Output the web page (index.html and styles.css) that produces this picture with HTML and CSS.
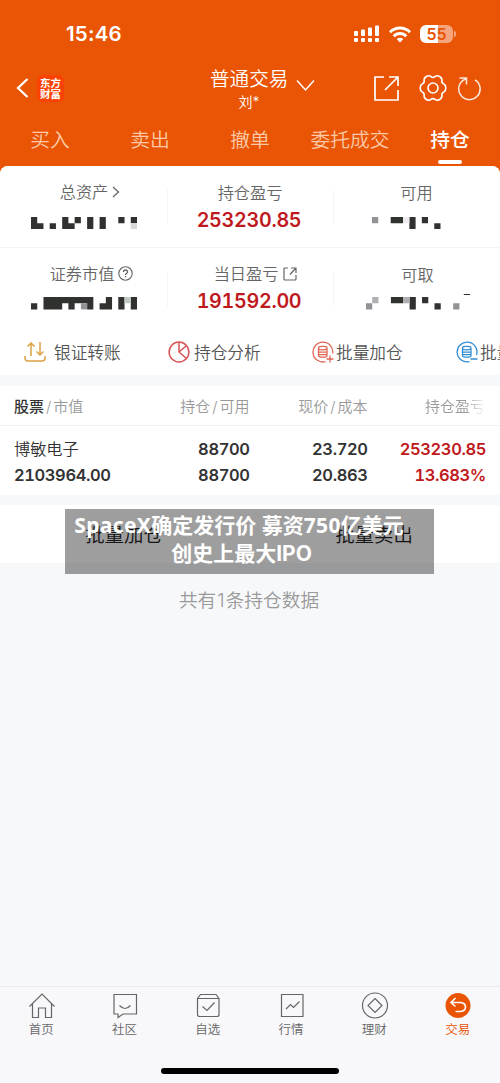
FILE: index.html
```html
<!DOCTYPE html>
<html lang="zh-CN">
<head>
<meta charset="utf-8">
<title>持仓</title>
<link rel="stylesheet" href="styles.css">
</head>
<body>
<div class="app">
  <header class="top">
    <div class="status">
      <span class="clock">15:46</span>
      <div class="status-icons">
        <svg width="26" height="18" viewBox="0 0 26 18" fill="#fff"><rect x="0" y="6" width="4" height="5" rx="1"/><rect x="7" y="4.500" width="4" height="6.500" rx="1"/><rect x="14" y="2.500" width="4" height="8.500" rx="1"/><rect x="21" y="0.500" width="4" height="10.500" rx="1"/><rect x="0" y="13" width="4" height="4" rx="1"/><rect x="7" y="13" width="4" height="4" rx="1"/><rect x="14" y="13" width="4" height="4" rx="1"/><rect x="21" y="13" width="4" height="4" rx="1"/></svg>
        <svg width="22" height="17" viewBox="0 0 22 17" fill="none" stroke="#fff" stroke-width="2.900"><path d="M1 6.200C6.500 .6 15.500 .6 21 6.200"/><path d="M4.700 10.200C8.200 6.600 13.800 6.600 17.300 10.200"/><path d="M11 16.500l-3.300-3.600c1.900-1.700 4.700-1.700 6.600 0z" fill="#fff" stroke="none"/></svg>
        <div class="battery"><span>5</span><span class="empty">5</span></div>
      </div>
    </div>
    <div class="titlebar">
      <svg class="back" width="13" height="20" viewBox="0 0 13 20" fill="none" stroke="#fff" stroke-width="2.300"><path d="M11.500 1L2 10l9.500 9"/></svg>
      <div class="logo">东方<br>财富</div>
      <div class="title"><div class="account">普通交易</div><div class="owner">刘*</div></div>
      <svg class="down" width="19" height="13" viewBox="0 0 19 13" fill="none" stroke="#fff" stroke-width="1.500"><path d="M1 1.500l8.500 9.500L18 1.500"/></svg>
      <svg class="share" width="27" height="27" viewBox="0 0 27 27" fill="none" stroke="#fff" stroke-width="1.700"><path d="M11 2H2v23h23V15M16 2h9v9M25 2L12 15"/></svg>
      <svg class="gear" width="28" height="28" viewBox="-14 -14 28 28" fill="none" stroke="#fff" stroke-width="1.600"><path d="M12.800 0Q12.800 3.060 10.870 3.980Q8.490 4.900 8.890 7.430Q9.280 9.950 6.630 11.480Q3.980 13 1.990 11.400Q0 9.800-1.990 11.400Q-3.980 13-6.630 11.480Q-9.280 9.950-8.890 7.430Q-8.490 4.900-10.870 3.980Q-12.800 3.060-12.800 0Q-12.800-3.060-10.870-3.980Q-8.490-4.900-8.890-7.430Q-9.280-9.950-6.630-11.480Q-3.980-13-1.990-11.400Q0-9.800 1.990-11.400Q3.980-13 6.630-11.480Q9.280-9.950 8.890-7.430Q8.490-4.900 10.870-3.980Q12.800-3.060 12.800 0Z"/><circle r="5"/></svg>
      <svg class="refresh" width="25" height="26" viewBox="0 0 25 26" fill="none" stroke="#fff" stroke-opacity=".85" stroke-width="1.500"><path d="M18 4.800A10.700 10.700 0 1 1 9.300 3.700M2.500 3H9.500V9.500"/></svg>
    </div>
    <nav class="tabs"><span>买入</span><span>卖出</span><span>撤单</span><span>委托成交</span><span class="on">持仓</span></nav>
  </header>

  <main class="panel">
    <section class="summary">
      <div class="cell">
        <div class="label total">总资产<svg width="8" height="14" viewBox="0 0 8 14" fill="none" stroke="#666" stroke-width="1.300"><path d="M1 2l5.500 5L1 12"/></svg></div>
        <svg class="mosaic" width="106" height="12.400" viewBox="0 0 17 2" preserveAspectRatio="none" fill="#30322f"><path d="M0 0h1v1h1v1H0zM3 1h1v1H3zM5 0h1v1h1v1H5zM7 0h1v1H7zM9 0h1v2H9zM11 0h1v2h-1zM14 0h1v1h-1zM16 0h1v1h-1z"/><path fill="#d8d8d8" d="M16 1h1v1h-1z"/></svg>
      </div>
      <div class="cell"><div class="label">持仓盈亏</div><div class="amount">253230.85</div></div>
      <div class="cell">
        <div class="label">可用</div>
        <svg class="mosaic avail" width="68.500" height="12.400" viewBox="0 0 11 2" preserveAspectRatio="none" fill="#30322f"><path d="M3 0h2v1H3zM6 0h1v2H6zM8 0h1v1H8zM10 1h1v1h-1z"/><path fill="#949296" d="M0 0h1v1H0z"/><path fill="#eeeaf0" d="M5 0h1v1H5z"/></svg>
      </div>
    </section>
    <section class="summary second">
      <div class="cell">
        <div class="label market">证券市值<svg width="15" height="15" viewBox="0 0 15 15" fill="none" stroke="#666" stroke-width="1.100"><circle cx="7.500" cy="7.500" r="6.700"/><path d="M5.500 6Q5.500 4 7.500 4T9.500 6Q9.500 7 8.400 7.500Q7.500 8 7.500 9M7.500 10v1.200" stroke-width="1.300"/></svg></div>
        <svg class="mosaic" width="106" height="12.400" viewBox="0 0 17 2" preserveAspectRatio="none" fill="#30322f"><path d="M0 1h1v1H0zM2 0h8v2H9V1H7v1H6V1H5v1H2zM12 0h1v2h-2V1h1zM14 0h1v2h-1zM16 0h1v2h-1z"/><path fill="#949296" d="M8 1h1v1H8z"/><path fill="#c1c9c3" d="M15 0h1v1h-1z"/></svg>
      </div>
      <div class="cell">
        <div class="label today">当日盈亏<svg width="14" height="14" viewBox="0 0 14 14" fill="none" stroke="#666" stroke-width="1.200"><path d="M5 1H2Q1 1 1 2v10q0 1 1 1h10q1 0 1-1V8M8 1h5v5M13 1L7 7.500"/></svg></div>
        <div class="amount">191592.00</div>
      </div>
      <div class="cell">
        <div class="label right">可取</div>
        <svg class="mosaic take" width="104" height="15.500" viewBox="0 -.5 16.700 2.500" preserveAspectRatio="none" fill="#30322f"><path d="M4 0h2v1H4zM7 0h1v2H7zM9 0h1v1H9zM11 1h1v1h-1zM15.700-.5h1v.16h-1z"/><path fill="#949296" d="M0 1h1v1H0zM14 1h1v1h-1z"/><path fill="#b1afb3" d="M1 0h1v1H1zM6 0h1v1H6z"/></svg>
      </div>
    </section>
    <section class="quick">
      <div class="action a1"><svg width="22" height="22" viewBox="0 0 22 22" fill="none" stroke="#dda044" stroke-width="1.500"><path d="M1 15v2q0 3 3 3h14q3 0 3-3v-2M7 15V2M3.500 5.500L7 2l3.500 3.500M16 1v13M12.500 10.500L16 14l3.500-3.500"/></svg><span>银证转账</span></div>
      <div class="action a2"><svg width="22" height="22" viewBox="0 0 22 22" fill="none" stroke="#d95355" stroke-width="1.500"><circle cx="11" cy="11" r="9.900"/><path d="M11 1v10l7.500 6.500M11 11l7-6"/></svg><span>持仓分析</span></div>
      <div class="action a3"><svg width="22" height="22" viewBox="0 0 22 22" fill="none" stroke="#df6654" stroke-width="1.300"><path d="M20.700 12.500A9.900 9.900 0 1 0 13.500 20.600M18 14.500v7M14.500 18h7"/><path d="M6.500 7q0-1.700 4.300-1.700T15 7v7.500q0 1.700-4.200 1.700T6.500 14.500zM6.500 7.500q0 1.300 4.300 1.300T15 7.500M6.500 11.200h8.500M6.500 13.700h8.500"/></svg><span>批量加仓</span></div>
      <div class="action a4"><svg width="22" height="22" viewBox="0 0 22 22" fill="none" stroke="#348fd2" stroke-width="1.300"><path d="M20.500 14A9.900 9.900 0 1 0 13.500 20.600M14.500 18h7"/><path d="M6.500 7q0-1.700 4.300-1.700T15 7v7.500q0 1.700-4.200 1.700T6.500 14.500zM6.500 7.500q0 1.300 4.300 1.300T15 7.500M6.500 11.200h8.500M6.500 13.700h8.500"/></svg><span>批量减仓</span></div>
    </section>
    <section class="holdings">
      <div class="row head"><span><b>股票</b><i>/</i>市值</span><span>持仓<i>/</i>可用</span><span>现价<i>/</i>成本</span><span class="fade">持仓盈亏</span></div>
      <div class="stock">
        <div class="row"><span class="name">博敏电子</span><span>88700</span><span>23.720</span><span class="red">253230.85</span></div>
        <div class="row"><span>2103964.00</span><span>88700</span><span>20.863</span><span class="red">13.683%</span></div>
      </div>
    </section>
    <section class="batch">
      <span>批量加仓</span><span>批量卖出</span>
      <div class="caption"><div class="line1"><span class="latin">SpaceX</span>确定发行价 募资<span class="latin">750</span>亿美元</div><div class="line2">创史上最大<span class="ipo">IPO</span></div></div>
    </section>
    <p class="count">共有<span>1</span>条持仓数据</p>
  </main>

  <footer class="bottom">
    <nav class="nav">
      <div class="item"><svg width="28" height="28" viewBox="0 0 28 28"><path d="M1.500 14.500L14 2l12.500 12.500M4.500 12v13.500h6V16h7v9.500h6V12"/></svg><span>首页</span></div>
      <div class="item"><svg width="28" height="28" viewBox="0 0 28 28"><path d="M3 2.500h22.500v19.500H12l-5 3.500V22H3zM8.500 13.500q5.500 6 11 0"/></svg><span>社区</span></div>
      <div class="item"><svg width="28" height="28" viewBox="0 0 28 28"><path d="M3.500 6.500h21.500v16q0 2-2 2H5.500q-2 0-2-2zM3.500 6.500l3-4h15.500l3 4M8.500 14.500l4.500 4 7.500-8"/></svg><span>自选</span></div>
      <div class="item"><svg width="28" height="28" viewBox="0 0 28 28"><path d="M3.500 2.500h21.500v22H3.500zM8 17l4.500-4.500 3 3 6-6"/></svg><span>行情</span></div>
      <div class="item"><svg width="28" height="28" viewBox="0 0 28 28"><circle cx="14" cy="13.500" r="12.500"/><path d="M14 6.500l7 7-7 7-7-7z"/></svg><span>理财</span></div>
      <div class="item active"><svg width="28" height="28" viewBox="0 0 28 28"><circle cx="14" cy="13.500" r="12.500" fill="#e95504" stroke="none"/><path stroke="#fff" stroke-width="1.600" d="M11.500 6l-4.500 4.500 4.500 4M7 10.500h9.500q5 .5 5 4.500t-5 4.500h-5"/></svg><span>交易</span></div>
    </nav>
    <div class="home-bar"></div>
  </footer>
</div>
</body>
</html>
```

FILE: styles.css
```css
* { box-sizing: border-box; }
body { margin: 0; font-family: Inter, "Noto Sans CJK SC", sans-serif; font-weight: 350; color: #333; }
svg { display: block; flex: none; }
i { font-style: normal; }
.app { width: 500px; height: 1083px; display: flex; flex-direction: column; overflow: hidden; background: linear-gradient(#e95504 0 180px, #f7f8fa 180px); }
.top { height: 166px; flex: none; color: #fff; }
.status { height: 60px; padding: 8px 42px 0 66px; display: flex; justify-content: space-between; align-items: center; }
.clock { font-size: 20.500px; font-weight: 600; line-height: 24px; letter-spacing: .2px; }
.status-icons { display: flex; align-items: center; gap: 9px; }
.battery { position: relative; width: 33px; height: 18px; margin-right: 5px; border-radius: 6px; background: linear-gradient(90deg, #fff 54%, #f4a57d 54%); font-size: 16px; font-weight: 600; line-height: 18px; color: #e95504; display: flex; justify-content: center; }
.battery::after { content: ""; position: absolute; right: -3px; top: 6px; width: 2px; height: 6px; border-radius: 0 2px 2px 0; background: #f4a57d; }
.titlebar { height: 53px; display: flex; align-items: center; padding: 3px 18px 0 16px; }
.logo { flex: none; width: 27px; height: 27px; margin-left: 8px; border-radius: 6px; background: #fb4203; text-align: center; font: bold 10.500px/11px "Noto Sans CJK SC", sans-serif; padding-top: 2px; }
.title { flex: none; margin-left: 146px; width: 78px; text-align: center; }
.account { font-size: 19.600px; line-height: 25px; white-space: nowrap; padding-top: 2px; }
.owner { font-size: 14px; line-height: 20px; }
.down { margin: -6px 0 0 8px; }
.share { margin-left: 58px; }
.gear { margin-left: 19px; }
.refresh { margin-left: auto; }
.tabs { display: grid; grid-template-columns: repeat(5, 100px); height: 53px; text-align: center; font-size: 19.800px; line-height: 54px; color: #fbc9a8; white-space: nowrap; }
.tabs .on { color: #fff; font-weight: 500; display: flex; flex-direction: column; align-items: center; }
.tabs .on::after { content: ""; width: 24px; height: 4px; margin-top: -7px; border-radius: 2px; background: #fff; }
.panel { flex: 1; background: #f7f8fa; border-radius: 8px 8px 0 0; overflow: hidden; }
.summary { display: grid; grid-template-columns: 167px 166px 167px; height: 82px; background: #fff; border-bottom: 1px solid #f3f4f6; }
.summary.second { height: 77px; border: 0; }
.cell { position: relative; padding-top: 14px; text-align: center; }
.cell + .cell::before { content: ""; position: absolute; left: 0; top: 24px; width: 1px; height: 34px; background: #f3f4f6; }
.label { display: flex; align-items: center; justify-content: center; font-size: 16.200px; line-height: 26px; height: 26px; color: #666; }
.total { gap: 4px; padding: 0 0 2px 13px; }
.market { gap: 4px; padding: 0 0 3px 16px; }
.today { gap: 5px; padding: 0 0 3px 11px; }
.right { padding: 0 0 1px 2px; }
.amount { font-size: 19.700px; letter-spacing: -.28px; line-height: 29px; font-weight: 600; color: #bf1920; font-variant-numeric: tabular-nums; margin-left: -2px; }
.second .amount { margin-top: -1px; }
.mosaic { margin: 10.700px 0 0 31px; }
.second .mosaic { margin-top: 9.300px; }
.mosaic.avail { margin-left: 39px; }
.second .mosaic.take { margin: 6.200px 0 0 33px; }
.quick { height: 50px; background: #fff; overflow: hidden; display: grid; grid-template-columns: 144px 144px 144px 144px; padding-left: 24px; }
.action { display: flex; align-items: center; gap: 4px; height: 53px; font-size: 16.700px; color: #555; white-space: nowrap; }
.a1 { gap: 8px; }
.a3, .a4 { gap: 2px; }
.holdings { margin-top: 11px; background: #fff; }
.row { display: grid; grid-template-columns: 120px 115.500px 118px 118.500px; padding: 0 14px; text-align: right; }
.row > :first-child { text-align: left; }
.head { height: 40px; line-height: 41px; font-size: 15px; color: #999; border-bottom: 1px solid #f0f1f2; }
.head b { font-weight: 500; color: #333; }
.head i { padding: 0 2px; }
.head .fade { padding-right: 1px; -webkit-mask-image: linear-gradient(90deg, #000 82%, transparent); mask-image: linear-gradient(90deg, #000 82%, transparent); }
.stock { height: 69px; padding-top: 10px; font-size: 16.500px; letter-spacing: -.4px; line-height: 26px; font-weight: 600; font-variant-numeric: tabular-nums; }
.name { font-weight: 350; font-size: 16.200px; letter-spacing: 0; }
.red { color: #bf1920; }
.batch { position: relative; height: 58px; margin-top: 10px; background: #fff; display: grid; grid-template-columns: 248px 252px; text-align: center; font-size: 19.400px; line-height: 61px; color: #222; }
.caption { position: absolute; left: 65px; top: 4px; width: 369px; height: 65px; background: rgba(0, 0, 0, .38); color: #fff; font: bold 21px/28px "Noto Sans", "Noto Sans CJK SC", sans-serif; white-space: nowrap; padding-top: 2px; }
.latin { letter-spacing: .35px; }
.ipo { font-family: Inter, sans-serif; }
.line1 { padding-right: 21px; }
.line2 { padding-right: 16px; }
.count { margin: 23px 0 0; padding-right: 2px; text-align: center; font-size: 18.700px; line-height: 29px; color: #999; }
.count span { padding: 0 1px; }
.bottom { flex: none; height: 97px; border-top: 1px solid #e9eaec; background: #f8f8fa; }
.nav { display: grid; grid-template-columns: repeat(6, 83.300px); padding-top: 5px; }
.item { display: flex; flex-direction: column; align-items: center; font-size: 12.500px; line-height: 20px; color: #666; }
.item svg { fill: none; stroke: #666; stroke-width: 1.200; }
.item span { padding-right: 1px; }
.item.active { color: #e95504; }
.home-bar { width: 178px; height: 6px; margin: 28px auto 0; border-radius: 3px; background: #000; }
```
